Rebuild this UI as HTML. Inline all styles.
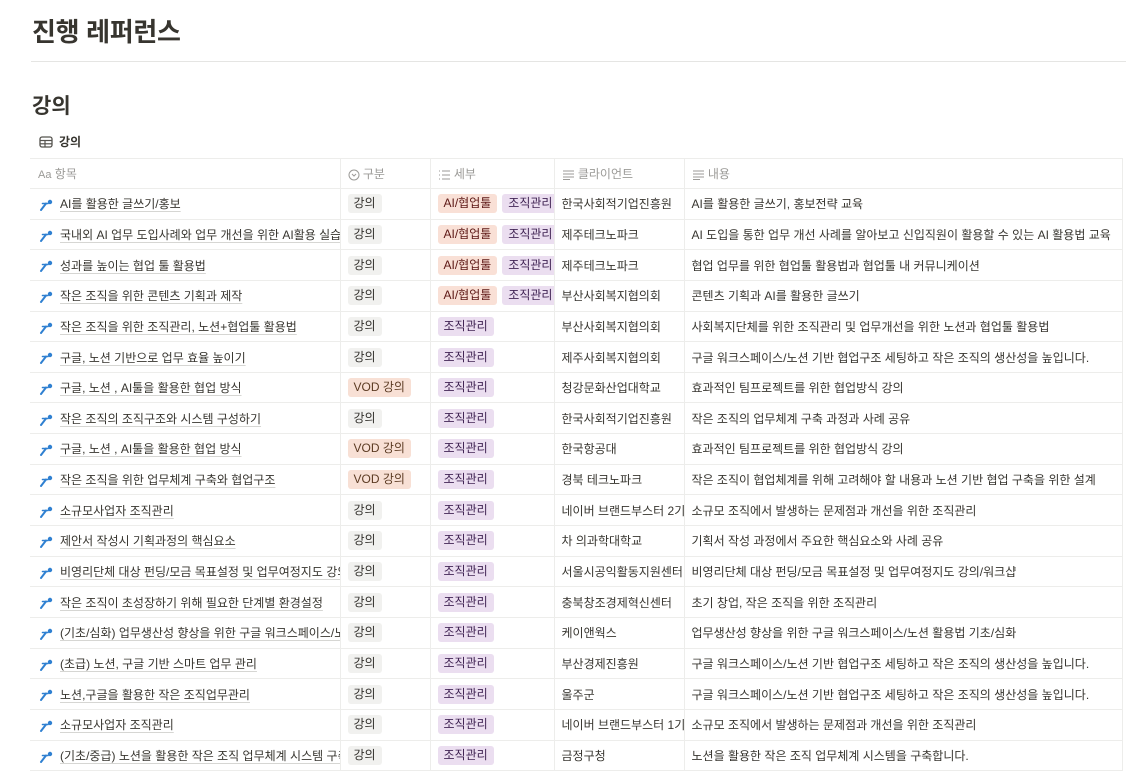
<!DOCTYPE html>
<html><head><meta charset="utf-8"><style>
*{margin:0;padding:0;box-sizing:border-box}
body{width:1126px;height:768px;overflow:hidden;background:#fff;font-family:"Liberation Sans","Noto Sans CJK KR",sans-serif;color:#37352f}
h1{position:absolute;left:32px;top:12px;font-size:26px;font-weight:700;letter-spacing:-0.3px}
.hr{position:absolute;left:31px;right:0;top:61px;height:1px;background:#e5e5e3}
h2{position:absolute;left:32px;top:90px;font-size:21px;font-weight:700}
.view{position:absolute;left:39px;top:133px;font-size:12px;font-weight:700;color:#37352f;display:flex;align-items:center;gap:6px}
table{position:absolute;left:30px;top:158px;width:1092px;border-collapse:collapse;table-layout:fixed;font-size:12px}
td{height:30.65px;border-top:1px solid #ededeb;border-bottom:1px solid #ededeb;border-right:1px solid #ededeb;padding:0 7px;white-space:nowrap;overflow:hidden;vertical-align:middle}
td:first-child{padding-left:8px;padding-right:2px}
tr.h td{height:30px;color:#9b9a97;font-size:12px}
.n{text-decoration:underline;text-decoration-color:#d6d6d3;text-underline-offset:3px}
.t{display:inline-block;padding:1px 6px;border-radius:3px;line-height:17px;margin-right:5px}
.g{background:#f1f1ef;color:#32302c}
.o{background:#f8e0d5;color:#5c3b23}
.r{background:#f9e0d6;color:#5d1715}
.p{background:#ebdef0;color:#412454}
svg{vertical-align:middle}
</style></head><body>
<h1>진행 레퍼런스</h1>
<div class="hr"></div>
<h2>강의</h2>
<div class="view"><svg width="14" height="12" viewBox="0 0 14 12"><rect x="1" y="1" width="12" height="10" rx="2" fill="none" stroke="#55534e" stroke-width="1.3"/><line x1="1" y1="4.5" x2="13" y2="4.5" stroke="#55534e" stroke-width="1.2"/><line x1="1" y1="7.8" x2="13" y2="7.8" stroke="#55534e" stroke-width="1.2"/><line x1="6" y1="4.5" x2="6" y2="11" stroke="#55534e" stroke-width="1.2"/></svg>강의</div>
<table>
<colgroup><col style="width:310px"><col style="width:90px"><col style="width:124px"><col style="width:130px"><col style="width:438px"></colgroup>
<tr class="h"><td><span style="font-size:11px">Aa</span> 항목</td><td><svg width="12" height="12" viewBox="0 0 12 12"><circle cx="6" cy="6" r="5" fill="none" stroke="#9b9a97"/><path d="M4 5l2 2 2-2" fill="none" stroke="#9b9a97"/></svg> 구분</td><td><svg width="13" height="10" viewBox="0 0 13 10"><path d="M1 1h1M1 5h1M1 9h1M4 1h8M4 5h8M4 9h8" stroke="#9b9a97"/></svg> 세부</td><td><svg width="13" height="10" viewBox="0 0 13 10"><path d="M1 1h11M1 4h11M1 7h11M1 9.5h7" stroke="#9b9a97"/></svg> 클라이언트</td><td><svg width="13" height="10" viewBox="0 0 13 10"><path d="M1 1h11M1 4h11M1 7h11M1 9.5h7" stroke="#9b9a97"/></svg> 내용</td></tr>
</table>
<script>
const I='<svg width="16" height="12" viewBox="0 0 16 12" style="margin-right:6px"><path d="M3 11L8 4.5" stroke="#2f80d1" stroke-width="2" stroke-linecap="round"/><path d="M4.5 4.5h5.5" stroke="#2f80d1" stroke-width="1.6" stroke-linecap="round"/><circle cx="12" cy="3" r="2.2" fill="#2f80d1"/></svg>';
const rows=[
["AI를 활용한 글쓰기/홍보","g강의","A","한국사회적기업진흥원","AI를 활용한 글쓰기, 홍보전략 교육"],
["국내외 AI 업무 도입사례와 업무 개선을 위한 AI활용 실습","g강의","A","제주테크노파크","AI 도입을 통한 업무 개선 사례를 알아보고 신입직원이 활용할 수 있는 AI 활용법 교육"],
["성과를 높이는 협업 툴 활용법","g강의","A","제주테크노파크","협업 업무를 위한 협업툴 활용법과 협업툴 내 커뮤니케이션"],
["작은 조직을 위한 콘텐츠 기획과 제작","g강의","A","부산사회복지협의회","콘텐츠 기획과 AI를 활용한 글쓰기"],
["작은 조직을 위한 조직관리, 노션+협업툴 활용법","g강의","P","부산사회복지협의회","사회복지단체를 위한 조직관리 및 업무개선을 위한 노션과 협업툴 활용법"],
["구글, 노션 기반으로 업무 효율 높이기","g강의","P","제주사회복지협의회","구글 워크스페이스/노션 기반 협업구조 세팅하고 작은 조직의 생산성을 높입니다."],
["구글, 노션 , AI툴을 활용한 협업 방식","oVOD 강의","P","청강문화산업대학교","효과적인 팀프로젝트를 위한 협업방식 강의"],
["작은 조직의 조직구조와 시스템 구성하기","g강의","P","한국사회적기업진흥원","작은 조직의 업무체계 구축 과정과 사례 공유"],
["구글, 노션 , AI툴을 활용한 협업 방식","oVOD 강의","P","한국항공대","효과적인 팀프로젝트를 위한 협업방식 강의"],
["작은 조직을 위한 업무체계 구축와 협업구조","oVOD 강의","P","경북 테크노파크","작은 조직이 협업체계를 위해 고려해야 할 내용과 노션 기반 협업 구축을 위한 설계"],
["소규모사업자 조직관리","g강의","P","네이버 브랜드부스터 2기","소규모 조직에서 발생하는 문제점과 개선을 위한 조직관리"],
["제안서 작성시 기획과정의 핵심요소","g강의","P","차 의과학대학교","기획서 작성 과정에서 주요한 핵심요소와 사례 공유"],
["비영리단체 대상 펀딩/모금 목표설정 및 업무여정지도 강의/워크샵","g강의","P","서울시공익활동지원센터","비영리단체 대상 펀딩/모금 목표설정 및 업무여정지도 강의/워크샵"],
["작은 조직이 초성장하기 위해 필요한 단계별 환경설정","g강의","P","충북창조경제혁신센터","초기 창업, 작은 조직을 위한 조직관리"],
["(기초/심화) 업무생산성 향상을 위한 구글 워크스페이스/노션 활용법","g강의","P","케이앤웍스","업무생산성 향상을 위한 구글 워크스페이스/노션 활용법 기초/심화"],
["(초급) 노션, 구글 기반 스마트 업무 관리","g강의","P","부산경제진흥원","구글 워크스페이스/노션 기반 협업구조 세팅하고 작은 조직의 생산성을 높입니다."],
["노션,구글을 활용한 작은 조직업무관리","g강의","P","울주군","구글 워크스페이스/노션 기반 협업구조 세팅하고 작은 조직의 생산성을 높입니다."],
["소규모사업자 조직관리","g강의","P","네이버 브랜드부스터 1기","소규모 조직에서 발생하는 문제점과 개선을 위한 조직관리"],
["(기초/중급) 노션을 활용한 작은 조직 업무체계 시스템 구축","g강의","P","금정구청","노션을 활용한 작은 조직 업무체계 시스템을 구축합니다."]];
let h='';
for(const r of rows){
 const det=r[2]=='A'?'<span class="t r">AI/협업툴</span><span class="t p">조직관리</span>':'<span class="t p">조직관리</span>';
 h+=`<tr><td>${I}<span class="n">${r[0]}</span></td><td><span class="t ${r[1][0]}">${r[1].slice(1)}</span></td><td style="padding-right:0">${det}</td><td>${r[3]}</td><td>${r[4]}</td></tr>`;
}
document.querySelector('table').insertAdjacentHTML('beforeend',h);
</script>
</body></html>
